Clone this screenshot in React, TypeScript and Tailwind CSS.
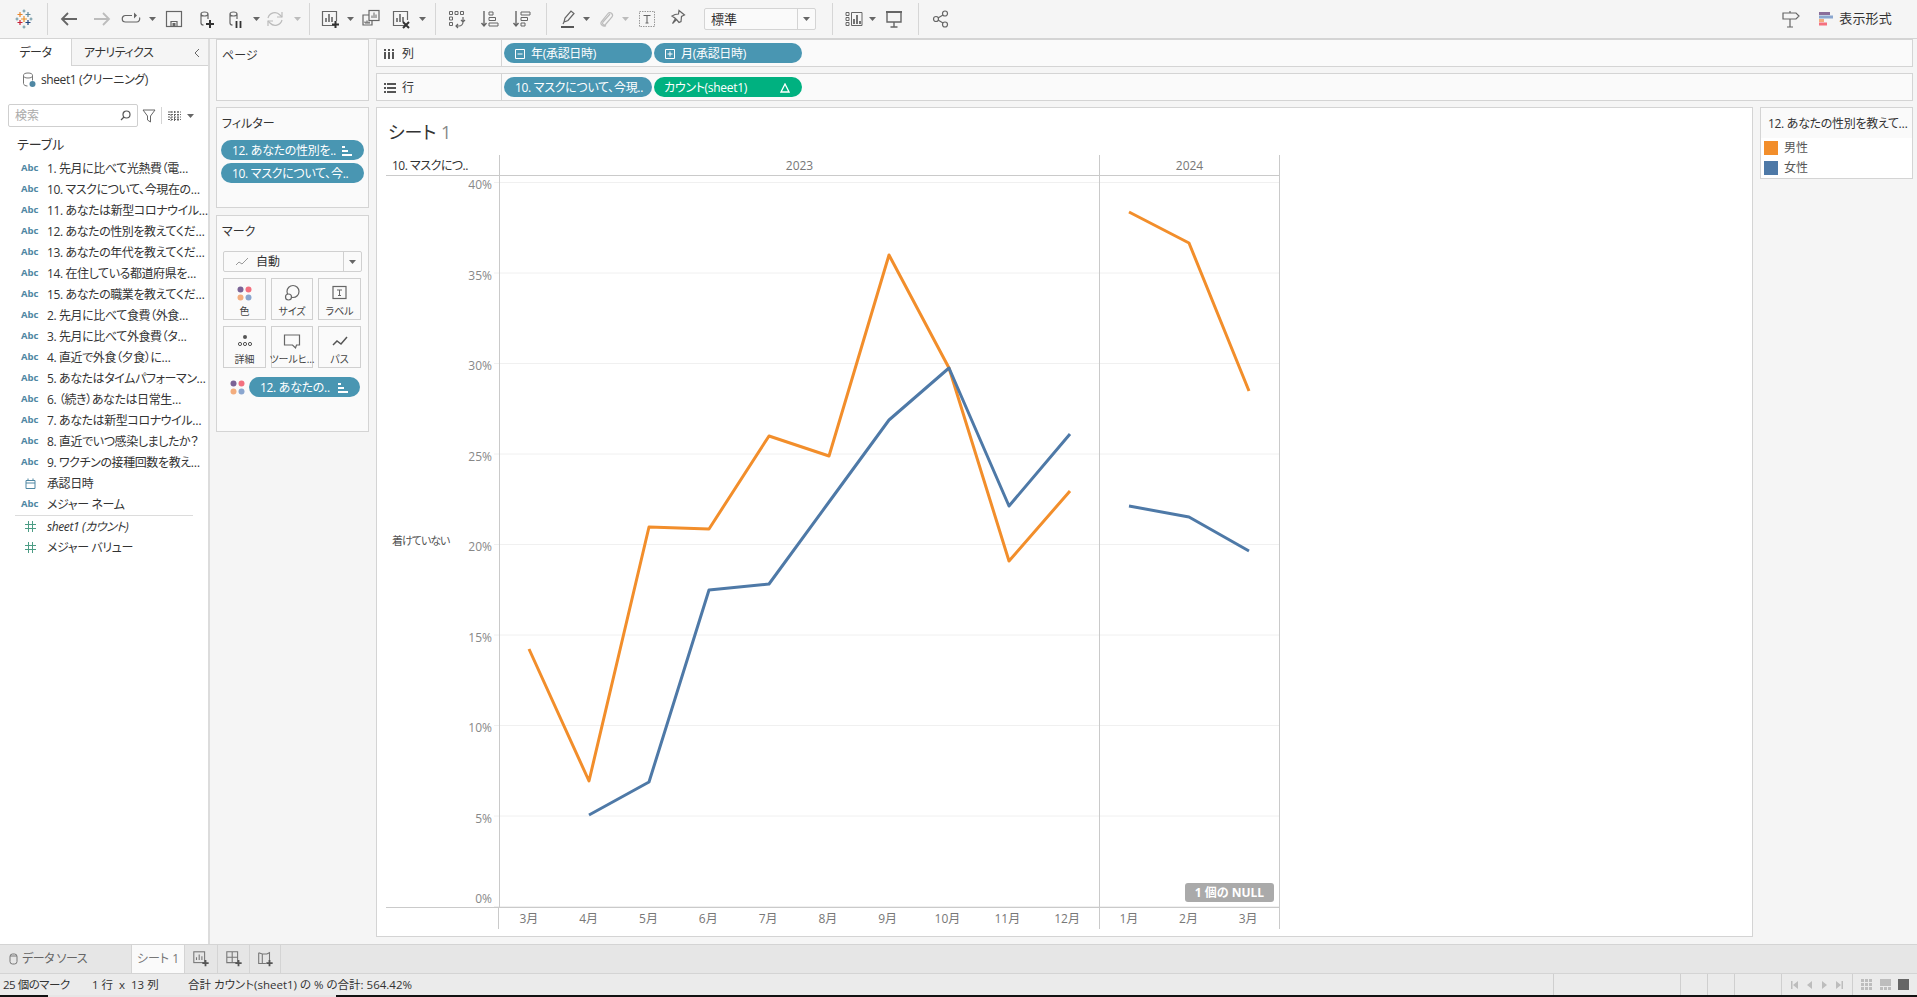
import type { ReactNode } from 'react';

const fields = [
  '1. 先月に比べて光熱費（電…',
  '10. マスクについて、今現在の…',
  '11. あなたは新型コロナウイル…',
  '12. あなたの性別を教えてくだ…',
  '13. あなたの年代を教えてくだ…',
  '14. 在住している都道府県を…',
  '15. あなたの職業を教えてくだ…',
  '2. 先月に比べて食費（外食…',
  '3. 先月に比べて外食費（タ…',
  '4. 直近で外食（夕食）に…',
  '5. あなたはタイムパフォーマン…',
  '6. （続き）あなたは日常生…',
  '7. あなたは新型コロナウイル…',
  '8. 直近でいつ感染しましたか？',
  '9. ワクチンの接種回数を教え…',
];

const Ico = ({ children, size = 20, color = '#666' }: { children: ReactNode; size?: number; color?: string }) => (
  <svg width={size} height={size} viewBox="0 0 20 20" fill="none" stroke={color} strokeWidth={1.2} className="block shrink-0">
    {children}
  </svg>
);

const Caret = ({ color = '#666' }: { color?: string }) => (
  <svg width="7" height="4" viewBox="0 0 7 4" className="block shrink-0">
    <path d="M0 0h7L3.5 4z" fill={color} />
  </svg>
);

const Divider = () => <div className="w-px h-[32px] bg-[#d6d6d6] shrink-0" />;

const Logo = () => (
  <svg width="20" height="20" viewBox="0 0 20 20" className="block" fill="none" strokeWidth={1.2}>
    <path d="M10 .5v3M8.500 2h3" stroke="#7199a6" />
    <path d="M10 16.500v3M8.500 18h3" stroke="#7199a6" />
    <path d="M3 8.500v3M1.500 10h3" stroke="#7199a6" />
    <path d="M17 8.500v3M15.500 10h3" stroke="#7199a6" />
    <path d="M6 3v5M3.500 5.500h5" stroke="#e8862b" />
    <path d="M14 3v5M11.500 5.500h5" stroke="#5b879b" />
    <path d="M6 11v5M3.500 13.500h5" stroke="#c72037" />
    <path d="M14 11v5M11.500 13.500h5" stroke="#1f457e" />
    <path d="M10 7v6M7 10h6" stroke="#eb9129" />
  </svg>
);

const SortBars = () => (
  <svg width="12" height="12" viewBox="0 0 12 12" className="block shrink-0" fill="#fff">
    <rect x="1" y="1" width="3" height="2" />
    <rect x="1" y="5" width="6" height="2" />
    <rect x="1" y="9" width="10" height="2" />
  </svg>
);

const Pill = ({ className, children }: { className: string; children: ReactNode }) => (
  <div className={`flex items-center rounded-full text-white text-[12px] tracking-[-0.3px] pt-px whitespace-nowrap overflow-hidden ${className}`}>
    {children}
  </div>
);

const Toolbar = () => (
  <div className="flex items-center h-[39px] bg-[#f5f5f5] border-b border-[#d4d4d4] shrink-0">
    <div className="w-[47px] flex justify-center"><Logo /></div>
    <Divider />
    <div className="flex items-center w-[261px] pl-[5px]">
      <div className="w-[32px] flex justify-center">
        <Ico color="#666"><path d="M18 10H3M9 4l-6 6 6 6" strokeWidth={1.8} /></Ico>
      </div>
      <div className="w-[34px] flex justify-center">
        <Ico color="#bcbcbc"><path d="M2 10h15M11 4l6 6-6 6" strokeWidth={1.8} /></Ico>
      </div>
      <div className="w-[24px] flex justify-center">
        <Ico><path d="M11 6.500H4.500a3.250 3.250 0 0 0 0 6.500h11a3.250 3.250 0 0 0 3-4.500" /><path d="M13 3.500v6l3-3z" fill="#666" stroke="none" /></Ico>
      </div>
      <div className="w-[18px] flex justify-center"><Caret /></div>
      <div className="w-[26px] flex justify-center">
        <Ico><rect x="2.500" y="2.500" width="15" height="15" /><path d="M7 17.500v-5h6v5" /><rect x="8.500" y="14" width="3" height="3" fill="#666" stroke="none" /></Ico>
      </div>
      <div className="w-[38px] flex justify-center">
        <Ico>
          <path d="M5 5v9c0 1.200 1 2 2.500 2.200M5 5c0-1.200 1.500-2 3.500-2s3.500.8 3.500 2-1.500 2-3.500 2S5 6.200 5 5zM12 5v5" />
          <path d="M14 11v8M10 15h8" stroke="#333" strokeWidth={2} />
        </Ico>
      </div>
      <div className="w-[22px] flex justify-center">
        <Ico>
          <path d="M4 5v9c0 1.200 1 2 2.500 2.200M4 5c0-1.200 1.500-2 3.500-2S11 3.800 11 5 9.500 7 7.500 7 4 6.200 4 5zM11 5v5" />
          <path d="M10.500 12v7M14.500 12v7" stroke="#333" strokeWidth={1.800} />
        </Ico>
      </div>
      <div className="w-[18px] flex justify-center"><Caret /></div>
      <div className="w-[20px] flex justify-center">
        <Ico color="#bcbcbc"><path d="M3 9a7 7 0 0 1 12-3l2 2M17 11a7 7 0 0 1-12 3l-2-2" /><path d="M17 3v5h-5M3 17v-5h5" /></Ico>
      </div>
      <div className="w-[24px] flex justify-center"><Caret color="#bcbcbc" /></div>
    </div>
    <Divider />
    <div className="flex items-center w-[125px] pl-[8px]">
      <div className="w-[26px] flex justify-center">
        <Ico><path d="M14 16.500H1.500v-14h14V12" /><path d="M5 13V9M8 13V5M11 13V8" strokeWidth={1.600} /><path d="M14.500 12v7M11 15.500h7" stroke="#333" strokeWidth={2} fill="none" /></Ico>
      </div>
      <div className="w-[12px] flex justify-center"><Caret /></div>
      <div className="w-[30px] flex justify-center">
        <Ico><rect x="8" y="1.500" width="10" height="10" /><path d="M11 9V6.500M13 9V3.500M15 9V5.500" strokeWidth={1} /><path d="M8 6H2v10h9v-4.500M4 14h5M4 12.500V14M6 11.500V14M8 12.500V14" /></Ico>
      </div>
      <div className="w-[32px] flex justify-center">
        <Ico><path d="M14 16.500H1.500v-14h14V11" /><path d="M5 13V9M8 13V5M11 13V8" strokeWidth={1.600} /><path d="M11 13l6 6M17 13l-6 6" stroke="#333" strokeWidth={2} /></Ico>
      </div>
      <div className="w-[8px] flex justify-center"><Caret /></div>
    </div>
    <Divider />
    <div className="flex items-center w-[110px] pl-[10px]">
      <div className="w-[22px] flex justify-center">
        <Ico>
          <path d="M2.500 2.500h3v3h-3zM8 2.500h3v3H8zM13.500 2.500h3v3h-3zM2.500 8h3v3h-3zM2.500 13.500h3v3h-3z" strokeWidth={1} />
          <path d="M16 8v5a4 4 0 0 1-4 4H9M14 11l2 2 2-2M11 15l-2 2 2 2" />
        </Ico>
      </div>
      <div className="w-[44px] flex justify-center">
        <Ico>
          <path d="M4 2v15M1.500 14L4 17l2.500-3" strokeWidth={1.400} />
          <path d="M9 3h4v3H9zM9 8.500h6.500v3H9zM9 14h9v3H9z" strokeWidth={1} />
        </Ico>
      </div>
      <div className="w-[20px] flex justify-center">
        <Ico>
          <path d="M4 2v15M1.500 14L4 17l2.500-3" strokeWidth={1.400} />
          <path d="M9 3h9v3H9zM9 8.500h6.500v3H9zM9 14h4v3H9z" strokeWidth={1} />
        </Ico>
      </div>
    </div>
    <Divider />
    <div className="flex items-center pl-[9px] w-[285px]">
      <div className="w-[24px] flex justify-center">
        <Ico><path d="M6 13l1-4 6-7 3 2.500-6 7zM6 13l-1 2" /><path d="M3 18h13" stroke="#444" strokeWidth={1.800} /></Ico>
      </div>
      <div className="w-[12px] flex justify-center"><Caret /></div>
      <div className="w-[28px] flex justify-center">
        <Ico color="#bcbcbc"><path d="M14 5l-7 8c-1.500 2 1 4 2.500 2.500L16 8c2-3-2-6-4-3.500l-6.500 8c-2 3 2 6 4.500 4" /></Ico>
      </div>
      <div className="w-[10px] flex justify-center"><Caret color="#bcbcbc" /></div>
      <div className="w-[34px] flex justify-center">
        <svg width="16" height="16" viewBox="0 0 16 16" fill="none" className="block">
          <rect x="0.500" y="0.500" width="15" height="15" stroke="#999" strokeDasharray="1.500 1" />
          <path d="M4.500 4.500h7M8 4.500v7.500M6.500 12h3" stroke="#666" strokeWidth={1.100} />
        </svg>
      </div>
      <div className="w-[26px] flex justify-center">
        <Ico><path d="M12 1.500l5.500 4.500-3 1.500-.5 5-2 1-2.500-3-4 4 3-5-3.500-2.500 3-1.500 3.500-.5z" /></Ico>
      </div>
      <div className="ml-[14px] w-[112px] h-[22px] bg-[#fafafa] border border-[#d4d4d4] rounded-[2px] flex items-center shrink-0">
        <span className="pl-[6px] flex-1 text-[13px] text-[#333] leading-none">標準</span>
        <div className="w-[18px] h-full border-l border-[#d4d4d4] flex items-center justify-center"><Caret /></div>
      </div>
    </div>
    <Divider />
    <div className="flex items-center pl-[7px] w-[85px]">
      <div className="w-[28px] flex justify-center">
        <Ico>
          <path d="M2 3.500h3v3H2zM2 8.500h3v3H2zM2 13.500h3v3H2zM7.500 3.500h10.500v13H7.500z" strokeWidth={1} />
          <path d="M10 15V10M13 15V6M16 15v-3" strokeWidth={1.800} />
        </Ico>
      </div>
      <div className="w-[8px] flex justify-center"><Caret /></div>
      <div className="w-[36px] flex justify-center">
        <Ico><path d="M3 3v10h14V3M10 13v5M6.500 18h7" strokeWidth={1.400} /><path d="M2 3h16" strokeWidth={2} /></Ico>
      </div>
    </div>
    <Divider />
    <div className="w-[44px] flex justify-center">
      <Ico><circle cx="14" cy="4.500" r="2.500" /><circle cx="14" cy="15.500" r="2.500" /><circle cx="5" cy="10" r="2.500" /><path d="M7 9l5-3M7 11l5 3" /></Ico>
    </div>
    <div className="ml-auto flex items-center pr-[25px]">
      <Ico><path d="M2 4h13l3 3-3 3H2zM9 10v8M6 18h6M9 2v2" /></Ico>
      <svg width="14" height="14" viewBox="0 0 14 14" className="block ml-[18px]">
        <rect x="0" y="0" width="11" height="3" fill="#8a6d9a" />
        <rect x="0" y="3.500" width="14" height="3" fill="#8aa6cf" />
        <rect x="0" y="7" width="5" height="3" fill="#f3ad7e" />
        <rect x="0" y="10.500" width="8" height="3" fill="#f5707f" />
      </svg>
      <span className="ml-[6px] text-[13px] text-[#333] tracking-[0.2px]">表示形式</span>
    </div>
  </div>
);

const FieldIcon = ({ type }: { type: 'abc' | 'date' | 'num' }) => {
  if (type === 'abc') {
    return <span className="w-[30px] pl-[4px] text-[9.500px] tracking-normal font-bold text-[#4f87a3] shrink-0">Abc</span>;
  }
  if (type === 'date') {
    return (
      <span className="w-[30px] pl-[8px] shrink-0">
        <svg width="11" height="11" viewBox="0 0 11 11" fill="none" stroke="#4f87a3" className="block">
          <path d="M1 2.500h9v8H1zM1 5h9M3 .5v2M8 .5v2" />
        </svg>
      </span>
    );
  }
  return (
    <span className="w-[30px] pl-[8px] shrink-0">
      <svg width="11" height="11" viewBox="0 0 11 11" fill="none" stroke="#4b9c84" className="block">
        <path d="M3.500 0v11M7.500 0v11M0 3.500h11M0 7.500h11" />
      </svg>
    </span>
  );
};

const FieldRow = ({ type, children, italic }: { type: 'abc' | 'date' | 'num'; children: ReactNode; italic?: boolean }) => (
  <div className="flex items-center h-[21px] pl-[17px] text-[12px] tracking-[-0.4px] text-[#333] whitespace-nowrap">
    <FieldIcon type={type} />
    <span className={italic ? 'italic' : ''}>{children}</span>
  </div>
);

const DataPanel = () => (
  <div className="w-[210px] shrink-0 bg-white border-r-2 border-[#dcdcdc] flex flex-col">
    <div className="flex h-[27px] text-[12px] tracking-[-0.5px] text-[#333]">
      <div className="w-[72px] pt-px flex items-center justify-center bg-white border-r border-[#d4d4d4]">データ</div>
      <div className="flex-1 pt-px flex items-center bg-[#f5f5f5] border-b border-[#d4d4d4] pl-[12px]">
        アナリティクス
        <svg width="7" height="10" viewBox="0 0 7 10" fill="none" stroke="#666" className="ml-auto mr-[8px]"><path d="M6 1L2 5l4 4" /></svg>
      </div>
    </div>
    <div className="flex items-center h-[27px] pl-[22px] pt-px text-[12px] tracking-[-0.4px] text-[#333]">
      <svg width="14" height="16" viewBox="0 0 14 16" fill="none" stroke="#777" className="block mr-[5px]">
        <ellipse cx="6" cy="3.500" rx="4.500" ry="2.500" />
        <path d="M1.500 3.500v8c0 1.500 2 2.500 4 2.500M10.500 3.500v5" />
        <circle cx="10.500" cy="12" r="3" fill="#4f87a3" stroke="none" />
      </svg>
      sheet1 (クリーニング)
    </div>
    <div className="flex items-center mt-[11px] pl-[8px]">
      <div className="w-[130px] h-[23px] border border-[#cfcfcf] rounded-[2px] flex items-center pl-[6px] text-[12px] text-[#aaa]">
        検索
        <svg width="11" height="11" viewBox="0 0 11 11" fill="none" stroke="#555" strokeWidth={1.200} className="ml-auto mr-[6px]"><circle cx="6.500" cy="4.500" r="3.500" /><path d="M4 7l-3 3" /></svg>
      </div>
      <svg width="14" height="14" viewBox="0 0 14 14" fill="none" stroke="#666" className="ml-[4px]"><path d="M1 1h12L8.500 7v6l-3-2V7z" /></svg>
      <div className="w-px h-[17px] bg-[#d4d4d4] ml-[5px]" />
      <svg width="13" height="10" viewBox="0 0 13 10" className="ml-[6px]" fill="none" stroke="#666"><path d="M0 1h13M0 3.500h13M0 6h13M0 8.500h13M3 0v10M6.500 0v10M10 0v10" strokeDasharray="2 1" /></svg>
      <span className="ml-[6px]"><Caret /></span>
    </div>
    <div className="mt-[8px] pl-[17px] h-[20px] flex items-center text-[13px] text-[#333]">テーブル</div>
    <div className="mt-[3px]">
      {fields.map((f) => (
        <FieldRow key={f} type="abc">{f}</FieldRow>
      ))}
      <FieldRow type="date">承認日時</FieldRow>
      <FieldRow type="abc">メジャー ネーム</FieldRow>
      <div className="h-px bg-[#dcdcdc] mx-[15px]" />
      <FieldRow type="num" italic>sheet1 (カウント)</FieldRow>
      <FieldRow type="num">メジャー バリュー</FieldRow>
    </div>
  </div>
);

const Card = ({ title, className, children }: { title: string; className: string; children?: ReactNode }) => (
  <div className={`bg-[#fafafa] border border-[#d4d4d4] ${className}`}>
    <div className="px-[5px] pt-[7px] text-[12px] text-[#333] leading-[18px]">{title}</div>
    {children}
  </div>
);

const MarkButton = ({ label, icon }: { label: string; icon: ReactNode }) => (
  <div className="h-[42px] border border-[#d0d0d0] flex flex-col items-center pt-[3px]">
    <div className="h-[22px] flex items-center">{icon}</div>
    <span className="text-[10px] text-[#444] leading-[14px] whitespace-nowrap">{label}</span>
  </div>
);

const ColorDots = () => (
  <svg width="15" height="15" viewBox="0 0 15 15" className="block shrink-0">
    <circle cx="3.500" cy="3.500" r="3" fill="#7b6396" />
    <circle cx="11.500" cy="3.500" r="3" fill="#f3707f" />
    <circle cx="3.500" cy="11.500" r="3" fill="#f3ad7e" />
    <circle cx="11.500" cy="11.500" r="3" fill="#8aa6cf" />
  </svg>
);

const SideCards = () => (
  <div className="w-[153px] ml-[6px] shrink-0 flex flex-col">
    <Card title="ページ" className="h-[62px]" />
    <Card title="フィルター" className="h-[101px] mt-[6px]">
      <div className="px-[4px] mt-[7px] flex flex-col gap-[3px]">
        <Pill className="bg-[#4996b2] h-[20px] pl-[11px] pr-[11px] justify-between">12. あなたの性別を.. <SortBars /></Pill>
        <Pill className="bg-[#4996b2] h-[20px] pl-[11px]">10. マスクについて、今..</Pill>
      </div>
    </Card>
    <Card title="マーク" className="h-[217px] mt-[7px]">
      <div className="px-[6px] mt-[10px]">
        <div className="h-[21px] border border-[#d0d0d0] rounded-[2px] flex items-center text-[12px] text-[#333]">
          <svg width="14" height="10" viewBox="0 0 14 10" fill="none" stroke="#999" className="ml-[11px] mr-[7px]"><path d="M1 8l3-3 3 2 6-6" /></svg>
          自動
          <div className="ml-auto w-[18px] h-full border-l border-[#d0d0d0] flex items-center justify-center"><Caret /></div>
        </div>
        <div className="grid grid-cols-[43px_42px_43px] gap-x-[5px] gap-y-[6px] mt-[6px]">
          <MarkButton label="色" icon={<ColorDots />} />
          <MarkButton label="サイズ" icon={
            <Ico><circle cx="11" cy="8.500" r="6" /><circle cx="6.500" cy="14" r="3" fill="#fafafa" /></Ico>
          } />
          <MarkButton label="ラベル" icon={
            <Ico><rect x="3" y="3.500" width="13" height="12" /><path d="M7 7h5M9.500 7v5.500M8 12.500h3" strokeWidth={1} /></Ico>
          } />
          <MarkButton label="詳細" icon={
            <svg width="16" height="14" viewBox="0 0 16 14" fill="none" stroke="#555" className="block">
              <circle cx="8" cy="3" r="2" fill="#555" stroke="none" />
              <circle cx="3" cy="10" r="1.600" /><circle cx="8" cy="10" r="1.600" /><circle cx="13" cy="10" r="1.600" />
            </svg>
          } />
          <MarkButton label="ツールヒ…" icon={
            <Ico><path d="M2.500 4h15v10h-3l-1 3-3-3h-8z" /></Ico>
          } />
          <MarkButton label="パス" icon={
            <Ico color="#555"><path d="M3 14l4-4 4 3 6-7" strokeWidth={1.500} /></Ico>
          } />
        </div>
        <div className="flex items-center mt-[9px] ml-[7px]">
          <ColorDots />
          <Pill className="ml-[4px] w-[111px] h-[20px] bg-[#4996b2] pl-[11px] pr-[11px] justify-between">12. あなたの.. <SortBars /></Pill>
        </div>
      </div>
    </Card>
  </div>
);

const Shelf = ({ label, icon, children }: { label: string; icon: ReactNode; children: ReactNode }) => (
  <div className="h-[28px] bg-[#fafafa] border border-[#d4d4d4] flex items-center">
    <div className="w-[125px] h-full border-r border-[#d4d4d4] flex items-center pl-[7px] pt-px text-[12px] text-[#333] shrink-0">
      <span className="w-[18px]">{icon}</span>{label}
    </div>
    <div className="flex pl-[2px] gap-[2px]">{children}</div>
  </div>
);

const orange: [number, number][] = [[529, 648], [589, 780], [649, 526], [709, 528], [769, 435], [829, 455], [889, 254], [949, 367], [1009, 560], [1070, 490]];
const blue: [number, number][] = [[589, 814], [649, 781], [709, 589], [769, 583], [829, 501], [889, 419], [949, 367], [1009, 505], [1070, 433]];
const orange24: [number, number][] = [[1129, 211], [1189, 242], [1249, 390]];
const blue24: [number, number][] = [[1129, 505], [1189, 516], [1249, 550]];

// page coordinates to svg coordinates, body of the table starts at x 462 / y 175
const pts = (list: [number, number][]) => list.map(([x, y]) => `${x - 462},${y - 175}`).join(' ');

const ticks = [40, 35, 30, 25, 20, 15, 10, 5, 0];
const months23 = ['3月', '4月', '5月', '6月', '7月', '8月', '9月', '10月', '11月', '12月'];
const months24 = ['1月', '2月', '3月'];

const Chart = () => (
  <div className="ml-[9px] w-[894px] relative">
    <div className="flex h-[21px] border-b border-[#cacaca] text-[12px]">
      <div className="w-[113px] pl-[6px] pt-px flex items-center tracking-[-0.5px] text-[#333] whitespace-nowrap">10. マスクにつ..</div>
      <div className="w-[600px] pt-px border-l border-[#cacaca] flex items-center justify-center text-[#777]">2023</div>
      <div className="w-[181px] pt-px border-l border-r border-[#cacaca] flex items-center justify-center text-[#777]">2024</div>
    </div>
    <div className="flex h-[732px] border-b border-[#cacaca]">
      <div className="w-[76px] flex items-center pl-[6px] text-[11px] tracking-[-1px] text-[#555] whitespace-nowrap">着けていない</div>
      <svg width="818" height="731" viewBox="0 0 818 731" className="block">
        {ticks.map((t) => {
          const y = 731 - t * 18.1;
          return (
            <g key={t}>
              <line x1="32" x2="818" y1={y - 0.5} y2={y - 0.5} stroke="#f0f0f0" />
              <text x="30" y={t === 0 ? 727 : y + 6} textAnchor="end" fontSize="12" fill="#888">{t}%</text>
            </g>
          );
        })}
        <line x1="37.500" x2="37.500" y1="0" y2="731" stroke="#cacaca" />
        <line x1="637.500" x2="637.500" y1="0" y2="731" stroke="#cacaca" />
        <line x1="817.500" x2="817.500" y1="0" y2="731" stroke="#cacaca" />
        <polyline points={pts(orange)} fill="none" stroke="#f28e2b" strokeWidth={3} strokeLinejoin="round" />
        <polyline points={pts(blue)} fill="none" stroke="#4e79a7" strokeWidth={3} strokeLinejoin="round" />
        <polyline points={pts(orange24)} fill="none" stroke="#f28e2b" strokeWidth={3} strokeLinejoin="round" />
        <polyline points={pts(blue24)} fill="none" stroke="#4e79a7" strokeWidth={3} strokeLinejoin="round" />
      </svg>
    </div>
    <div className="absolute left-[799px] top-[728px] w-[89px] h-[19px] rounded-[3px] bg-[#aaaaaa] flex items-center justify-center text-white text-[12px] font-bold whitespace-nowrap">1 個の NULL</div>
    <div className="flex h-[21px] text-[12px] text-[#777]">
      <div className="w-[113px]" />
      <div className="w-[600px] pt-px border-l border-[#cacaca] flex -ml-px pl-px">
        {months23.map((m) => (
          <div key={m} className="w-[60px] flex items-center justify-center -translate-x-px">{m}</div>
        ))}
      </div>
      <div className="w-[181px] pt-px border-l border-r border-[#cacaca] flex ml-px">
        {months24.map((m) => (
          <div key={m} className="w-[60px] flex items-center justify-center -translate-x-px">{m}</div>
        ))}
      </div>
    </div>
  </div>
);

const Sheet = () => (
  <div className="flex-1 flex flex-col min-w-0 ml-[7px] mr-[4px]">
    <div className="flex flex-col gap-[6px]">
      <Shelf label="列" icon={
        <svg width="11" height="10" viewBox="0 0 11 10" fill="#555" className="block"><path d="M0 0h2v2H0zM4 0h2v2H4zM8 0h2v2H8zM0 3h2v7H0zM4 3h2v7H4zM8 3h2v7H8z" /></svg>
      }>
        <Pill className="w-[148px] h-[20px] bg-[#4996b2] pl-[11px] gap-[6px]">
          <svg width="10" height="10" viewBox="0 0 10 10" fill="none" stroke="#fff"><path d="M.5.5h9v9h-9zM2.500 5h5" /></svg>
          <span>年(承認日時)</span>
        </Pill>
        <Pill className="w-[148px] h-[20px] bg-[#4996b2] pl-[11px] gap-[6px]">
          <svg width="10" height="10" viewBox="0 0 10 10" fill="none" stroke="#fff"><path d="M.5.5h9v9h-9zM2.500 5h5M5 2.500v5" /></svg>
          <span>月(承認日時)</span>
        </Pill>
      </Shelf>
      <Shelf label="行" icon={
        <svg width="12" height="10" viewBox="0 0 12 10" fill="#555" className="block"><path d="M0 0h2v2H0zM3 0h9v2H3zM0 4h2v2H0zM3 4h9v2H3zM0 8h2v2H0zM3 8h9v2H3z" /></svg>
      }>
        <Pill className="w-[148px] h-[20px] bg-[#4996b2] pl-[11px]">10. マスクについて、今現..</Pill>
        <Pill className="w-[148px] h-[20px] bg-[#00b180] pl-[10px] pr-[12px] justify-between">
          <span>カウント(sheet1)</span>
          <svg width="10" height="10" viewBox="0 0 10 10" fill="none" stroke="#fff" strokeWidth={1.300}><path d="M5 1L1 9h8z" /></svg>
        </Pill>
      </Shelf>
    </div>
    <div className="flex mt-[6px] h-[830px]">
      <div className="w-[1377px] h-full bg-white border border-[#d4d4d4] shrink-0">
        <div className="h-[47px] pl-[11px] pt-[11px] text-[18px] leading-[26px] text-[#333]">
          シート <span className="text-[#888]">1</span>
        </div>
        <Chart />
      </div>
      <div className="ml-[7px] w-[153px] h-[72px] bg-white border border-[#d4d4d4] shrink-0">
        <div className="h-[30px] pt-px bg-[#fafafa] flex items-center pl-[7px] text-[12px] tracking-[-0.3px] text-[#333] whitespace-nowrap">12. あなたの性別を教えて…</div>
        <div className="flex items-center h-[20px] pl-[3px] text-[12px] text-[#555]">
          <span className="w-[14px] h-[14px] bg-[#f28e2b] mr-[6px]" />男性
        </div>
        <div className="flex items-center h-[20px] pl-[3px] text-[12px] text-[#555]">
          <span className="w-[14px] h-[14px] bg-[#4e79a7] mr-[6px]" />女性
        </div>
      </div>
    </div>
  </div>
);

const BottomBars = () => (
  <div className="shrink-0">
    <div className="h-[30px] bg-[#e6e6e6] border-t border-b border-[#d4d4d4] flex items-stretch text-[12px] text-[#666]">
      <div className="w-[131px] flex items-center pl-[9px] gap-[4px] tracking-[-0.5px]">
        <svg width="9" height="12" viewBox="0 0 9 12" fill="none" stroke="#777"><rect x="1" y="1" width="7" height="10" rx="2.500" /><path d="M1 3h7" /></svg>
        データ ソース
      </div>
      <div className="w-[54px] bg-[#fafafa] border-x border-[#d4d4d4] flex items-center justify-center text-[#777]">シート 1</div>
      <div className="w-[33px] border-r border-[#d4d4d4] flex items-center justify-center">
        <Ico size={18} color="#777"><rect x="2" y="2" width="12" height="12" /><path d="M5 11V8M8 11V5M11 11V7" /><path d="M15 11v7M11.500 14.500h7" stroke="#555" strokeWidth={2} /></Ico>
      </div>
      <div className="w-[32px] border-r border-[#d4d4d4] flex items-center justify-center">
        <Ico size={18} color="#777"><path d="M2 2h12v12H2zM2 8h12M8 2v12" /><path d="M15 11v7M11.500 14.500h7" stroke="#555" strokeWidth={2} /></Ico>
      </div>
      <div className="w-[31px] border-r border-[#d4d4d4] flex items-center justify-center">
        <Ico size={18} color="#777"><path d="M3 3l4 1.500h5l3-1.500v9M3 3v12h8M7 4.500V15" /><path d="M15 11v7M11.500 14.500h7" stroke="#555" strokeWidth={2} /></Ico>
      </div>
    </div>
    <div className="h-[21px] bg-[#ebebeb] flex items-stretch text-[11.500px] text-[#333] whitespace-nowrap">
      <div className="w-[92px] pl-[3px] pt-px flex items-center tracking-[-0.5px]">25 個のマーク</div>
      <div className="w-[96px] pt-px flex items-center">1 行&nbsp; x&nbsp; 13 列</div>
      <div className="w-[1365px] pt-px flex items-center">合計 カウント(sheet1) の % の合計: 564.42%</div>
      <div className="w-[127px] border-l border-[#cfcfcf]" />
      <div className="w-[27px] border-l border-[#cfcfcf]" />
      <div className="w-[27px] border-l border-[#cfcfcf]" />
      <div className="w-[47px] border-l border-[#cfcfcf]" />
      <div className="w-[71px] border-l border-[#cfcfcf] flex items-center justify-around px-[4px]">
        <svg width="7" height="8" viewBox="0 0 7 8" fill="#bdbdbd"><path d="M0 0h1.500v8H0zM7 0v8L2 4z" /></svg>
        <svg width="5" height="8" viewBox="0 0 5 8" fill="#bdbdbd"><path d="M5 0v8L0 4z" /></svg>
        <svg width="5" height="8" viewBox="0 0 5 8" fill="#bdbdbd"><path d="M0 0v8l5-4z" /></svg>
        <svg width="7" height="8" viewBox="0 0 7 8" fill="#bdbdbd"><path d="M7 0H5.500v8H7zM0 0v8l5-4z" /></svg>
      </div>
      <div className="flex-1 border-l border-[#cfcfcf] flex items-center justify-between px-[8px]">
        <svg width="11" height="11" viewBox="0 0 11 11" fill="#bdbdbd"><path d="M0 0h3v3H0zM4 0h3v3H4zM8 0h3v3H8zM0 4h3v3H0zM4 4h3v3H4zM8 4h3v3H8zM0 8h3v3H0zM4 8h3v3H4zM8 8h3v3H8z" /></svg>
        <svg width="11" height="11" viewBox="0 0 11 11" fill="#bdbdbd"><path d="M0 0h11v7H0zM0 8h3v3H0zM4 8h3v3H4zM8 8h3v3H8z" /></svg>
        <svg width="11" height="11" viewBox="0 0 11 11" fill="#666"><path d="M0 0h11v11H0z" /></svg>
      </div>
    </div>
    <div className="h-[2px] flex bg-[#111]">
      <div className="ml-[48px] w-[288px] bg-[#e6e6e6]" />
    </div>
  </div>
);

export default function App() {
  return (
    <div className="w-[1917px] h-[997px] overflow-hidden flex flex-col bg-[#f5f5f5] [font-family:'Open_Sans','Noto_Sans_CJK_JP',sans-serif] [font-feature-settings:'palt']">
      <Toolbar />
      <div className="flex flex-1 min-h-0">
        <DataPanel />
        <div className="flex-1 flex min-w-0 pb-[7px]">
          <SideCards />
          <Sheet />
        </div>
      </div>
      <BottomBars />
    </div>
  );
}
